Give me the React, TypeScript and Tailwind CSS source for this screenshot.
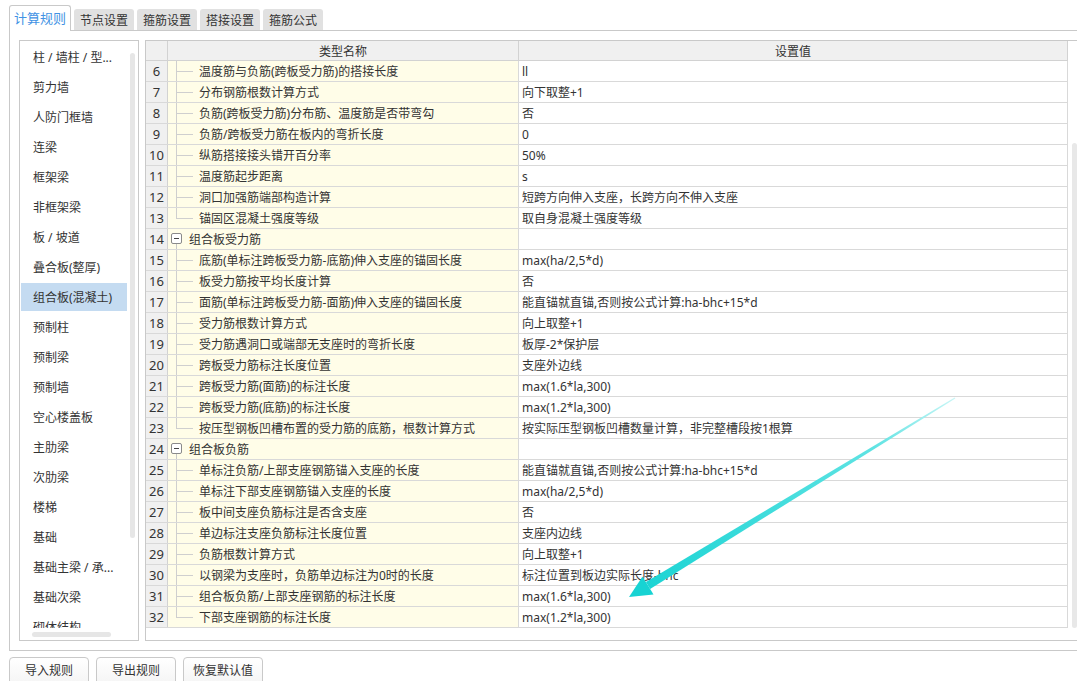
import React from "react";

type Row = { n: number; name: string; value?: string; group?: boolean; last?: boolean };

const rows: Row[] = [
  { n: 6, name: "温度筋与负筋(跨板受力筋)的搭接长度", value: "ll" },
  { n: 7, name: "分布钢筋根数计算方式", value: "向下取整+1" },
  { n: 8, name: "负筋(跨板受力筋)分布筋、温度筋是否带弯勾", value: "否" },
  { n: 9, name: "负筋/跨板受力筋在板内的弯折长度", value: "0" },
  { n: 10, name: "纵筋搭接接头错开百分率", value: "50%" },
  { n: 11, name: "温度筋起步距离", value: "s" },
  { n: 12, name: "洞口加强筋端部构造计算", value: "短跨方向伸入支座，长跨方向不伸入支座" },
  { n: 13, name: "锚固区混凝土强度等级", value: "取自身混凝土强度等级", last: true },
  { n: 14, name: "组合板受力筋", group: true },
  { n: 15, name: "底筋(单标注跨板受力筋-底筋)伸入支座的锚固长度", value: "max(ha/2,5*d)" },
  { n: 16, name: "板受力筋按平均长度计算", value: "否" },
  { n: 17, name: "面筋(单标注跨板受力筋-面筋)伸入支座的锚固长度", value: "能直锚就直锚,否则按公式计算:ha-bhc+15*d" },
  { n: 18, name: "受力筋根数计算方式", value: "向上取整+1" },
  { n: 19, name: "受力筋遇洞口或端部无支座时的弯折长度", value: "板厚-2*保护层" },
  { n: 20, name: "跨板受力筋标注长度位置", value: "支座外边线" },
  { n: 21, name: "跨板受力筋(面筋)的标注长度", value: "max(1.6*la,300)" },
  { n: 22, name: "跨板受力筋(底筋)的标注长度", value: "max(1.2*la,300)" },
  { n: 23, name: "按压型钢板凹槽布置的受力筋的底筋，根数计算方式", value: "按实际压型钢板凹槽数量计算，非完整槽段按1根算", last: true },
  { n: 24, name: "组合板负筋", group: true },
  { n: 25, name: "单标注负筋/上部支座钢筋锚入支座的长度", value: "能直锚就直锚,否则按公式计算:ha-bhc+15*d" },
  { n: 26, name: "单标注下部支座钢筋锚入支座的长度", value: "max(ha/2,5*d)" },
  { n: 27, name: "板中间支座负筋标注是否含支座", value: "否" },
  { n: 28, name: "单边标注支座负筋标注长度位置", value: "支座内边线" },
  { n: 29, name: "负筋根数计算方式", value: "向上取整+1" },
  { n: 30, name: "以钢梁为支座时，负筋单边标注为0时的长度", value: "标注位置到板边实际长度-bhc" },
  { n: 31, name: "组合板负筋/上部支座钢筋的标注长度", value: "max(1.6*la,300)" },
  { n: 32, name: "下部支座钢筋的标注长度", value: "max(1.2*la,300)", last: true },
];

const sideItems = [
  "柱 / 墙柱 / 型...",
  "剪力墙",
  "人防门框墙",
  "连梁",
  "框架梁",
  "非框架梁",
  "板 / 坡道",
  "叠合板(整厚)",
  "组合板(混凝土)",
  "预制柱",
  "预制梁",
  "预制墙",
  "空心楼盖板",
  "主肋梁",
  "次肋梁",
  "楼梯",
  "基础",
  "基础主梁 / 承...",
  "基础次梁",
  "砌体结构",
];

function NameCell({ r }: { r: Row }) {
  if (r.group) {
    return (
      <div className="relative h-full flex items-center pt-[2px] pl-[21px] whitespace-nowrap">
        <span className="absolute left-[3px] top-[4px] w-[11px] h-[11px] border border-[#8a8a8a] rounded-[2px] bg-white flex items-center justify-center">
          <span className="block w-[5px] h-px bg-[#444]" />
        </span>
        <span className="absolute left-[8px] top-[15px] bottom-0 w-px bg-[#c8c8c8]" />
        {r.name}
      </div>
    );
  }
  return (
    <div className="relative h-full flex items-center pt-[2px] pl-[31px] whitespace-nowrap">
      <span className={`absolute left-[8px] top-0 w-px bg-[#cfcfcf] ${r.last ? "h-[10px]" : "h-full"}`} />
      <span className="absolute left-[8px] top-[10px] w-[17px] h-px bg-[#cfcfcf]" />
      {r.name}
    </div>
  );
}

export default function App() {
  return (
    <div className="relative w-[1077px] h-[681px] overflow-hidden bg-white text-[#333] font-['Noto_Sans','Noto_Sans_CJK_SC',sans-serif]">
      {/* Tabs */}
      <div className="flex items-end h-[30px] pl-[9px] pt-[5px] gap-[3px]">
        <div className="relative z-10 -mb-px h-[26px] w-[62px] flex items-center justify-center border border-b-0 border-[#c9c9c9] rounded-t-[3px] bg-white text-[13px] text-[#4292e4]">
          计算规则
        </div>
        {["节点设置", "箍筋设置", "搭接设置", "箍筋公式"].map((t) => (
          <div
            key={t}
            className="h-[21px] w-[60px] flex items-center justify-center pt-[2px] bg-[#e1e1e1] rounded-t-[3px] text-[12px] text-[#333]"
          >
            {t}
          </div>
        ))}
      </div>

      {/* Panel */}
      <div className="w-[1100px] h-[621px] ml-[9px] border border-[#c9c9c9] p-[9px] flex gap-[6px]">
        {/* Sidebar */}
        <div className="w-[120px] h-full shrink-0 border border-[#c9c9c9] flex flex-col">
          <div className="flex h-[587px] overflow-hidden">
            <div className="w-[108px] pt-[1px] flex flex-col shrink-0">
              {sideItems.map((t, i) => (
                <div key={t} className="h-[30px] py-[1px] px-[1px] shrink-0">
                  <div
                    className={`h-full flex items-center pt-[2px] pl-[12px] text-[12px] whitespace-nowrap ${
                      i === 8 ? "bg-[#c4dbf1]" : ""
                    }`}
                  >
                    {t}
                  </div>
                </div>
              ))}
            </div>
            <div className="pl-[2px] pt-[12px]">
              <div className="w-[5px] h-[485px] rounded-full bg-[#e6e6e6]" />
            </div>
          </div>
          <div className="pl-[12px] pt-[4px]">
            <div className="w-[79px] h-[5px] rounded-full bg-[#e6e6e6]" />
          </div>
        </div>

        {/* Table box */}
        <div className="flex-1 h-full border border-[#c9c9c9] flex">
          <div className="w-[922px] shrink-0 flex flex-col text-[12px]">
            <div className="flex h-[20px] border-b border-[#d2d2d2] bg-[#f0f0f0]">
              <div className="w-[22px] border-r border-[#d2d2d2]" />
              <div className="w-[351px] border-r border-[#d2d2d2] flex items-center justify-center pt-[2px]">类型名称</div>
              <div className="w-[549px] border-r border-[#d2d2d2] flex items-center justify-center pt-[2px]">设置值</div>
            </div>
            {rows.map((r) => (
              <div key={r.n} className="flex h-[21px] border-b border-[#d9d9d9]">
                <div className="w-[22px] shrink-0 bg-[#f0f0f0] border-r border-[#d2d2d2] flex items-center justify-center pt-[2px] text-[13px]">
                  {r.n}
                </div>
                <div className="w-[351px] shrink-0 bg-[#fffde8] border-r border-[#d9d9d9]">
                  <NameCell r={r} />
                </div>
                <div className="w-[549px] shrink-0 border-r border-[#d9d9d9] flex items-center pt-[2px] pl-[3px] whitespace-nowrap">
                  {r.value ?? ""}
                </div>
              </div>
            ))}
          </div>
          <div className="pl-[4px] pt-[102px]">
            <div className="w-[5px] h-[485px] rounded-full bg-[#e8e8e8]" />
          </div>
        </div>
      </div>

      {/* Buttons */}
      <div className="flex gap-[7px] pl-[9px] pt-[6px]">
        {["导入规则", "导出规则", "恢复默认值"].map((t) => (
          <div
            key={t}
            className="w-[80px] h-[30px] border border-[#c9c9c9] rounded-t-[4px] bg-gradient-to-b from-white to-[#f4f4f4] flex justify-center pt-[4px] text-[12px] text-[#333]"
          >
            {t}
          </div>
        ))}
      </div>

      {/* Arrow overlay */}
      <svg className="absolute left-0 top-0 pointer-events-none" width="1077" height="681" viewBox="0 0 1077 681">
        <defs>
          <linearGradient id="ag" x1="955" y1="398" x2="629" y2="597" gradientUnits="userSpaceOnUse">
            <stop offset="0" stopColor="#c8f6f6" />
            <stop offset="0.25" stopColor="#5fe3e3" />
            <stop offset="1" stopColor="#17d3d3" />
          </linearGradient>
        </defs>
        <polygon points="955.3,398.5 954.7,397.5 645.9,582.1 650.1,588.9" fill="url(#ag)" />
        <polygon points="629,597 642.5,576.5 653.5,594.5" fill="#17d3d3" />
      </svg>
    </div>
  );
}
